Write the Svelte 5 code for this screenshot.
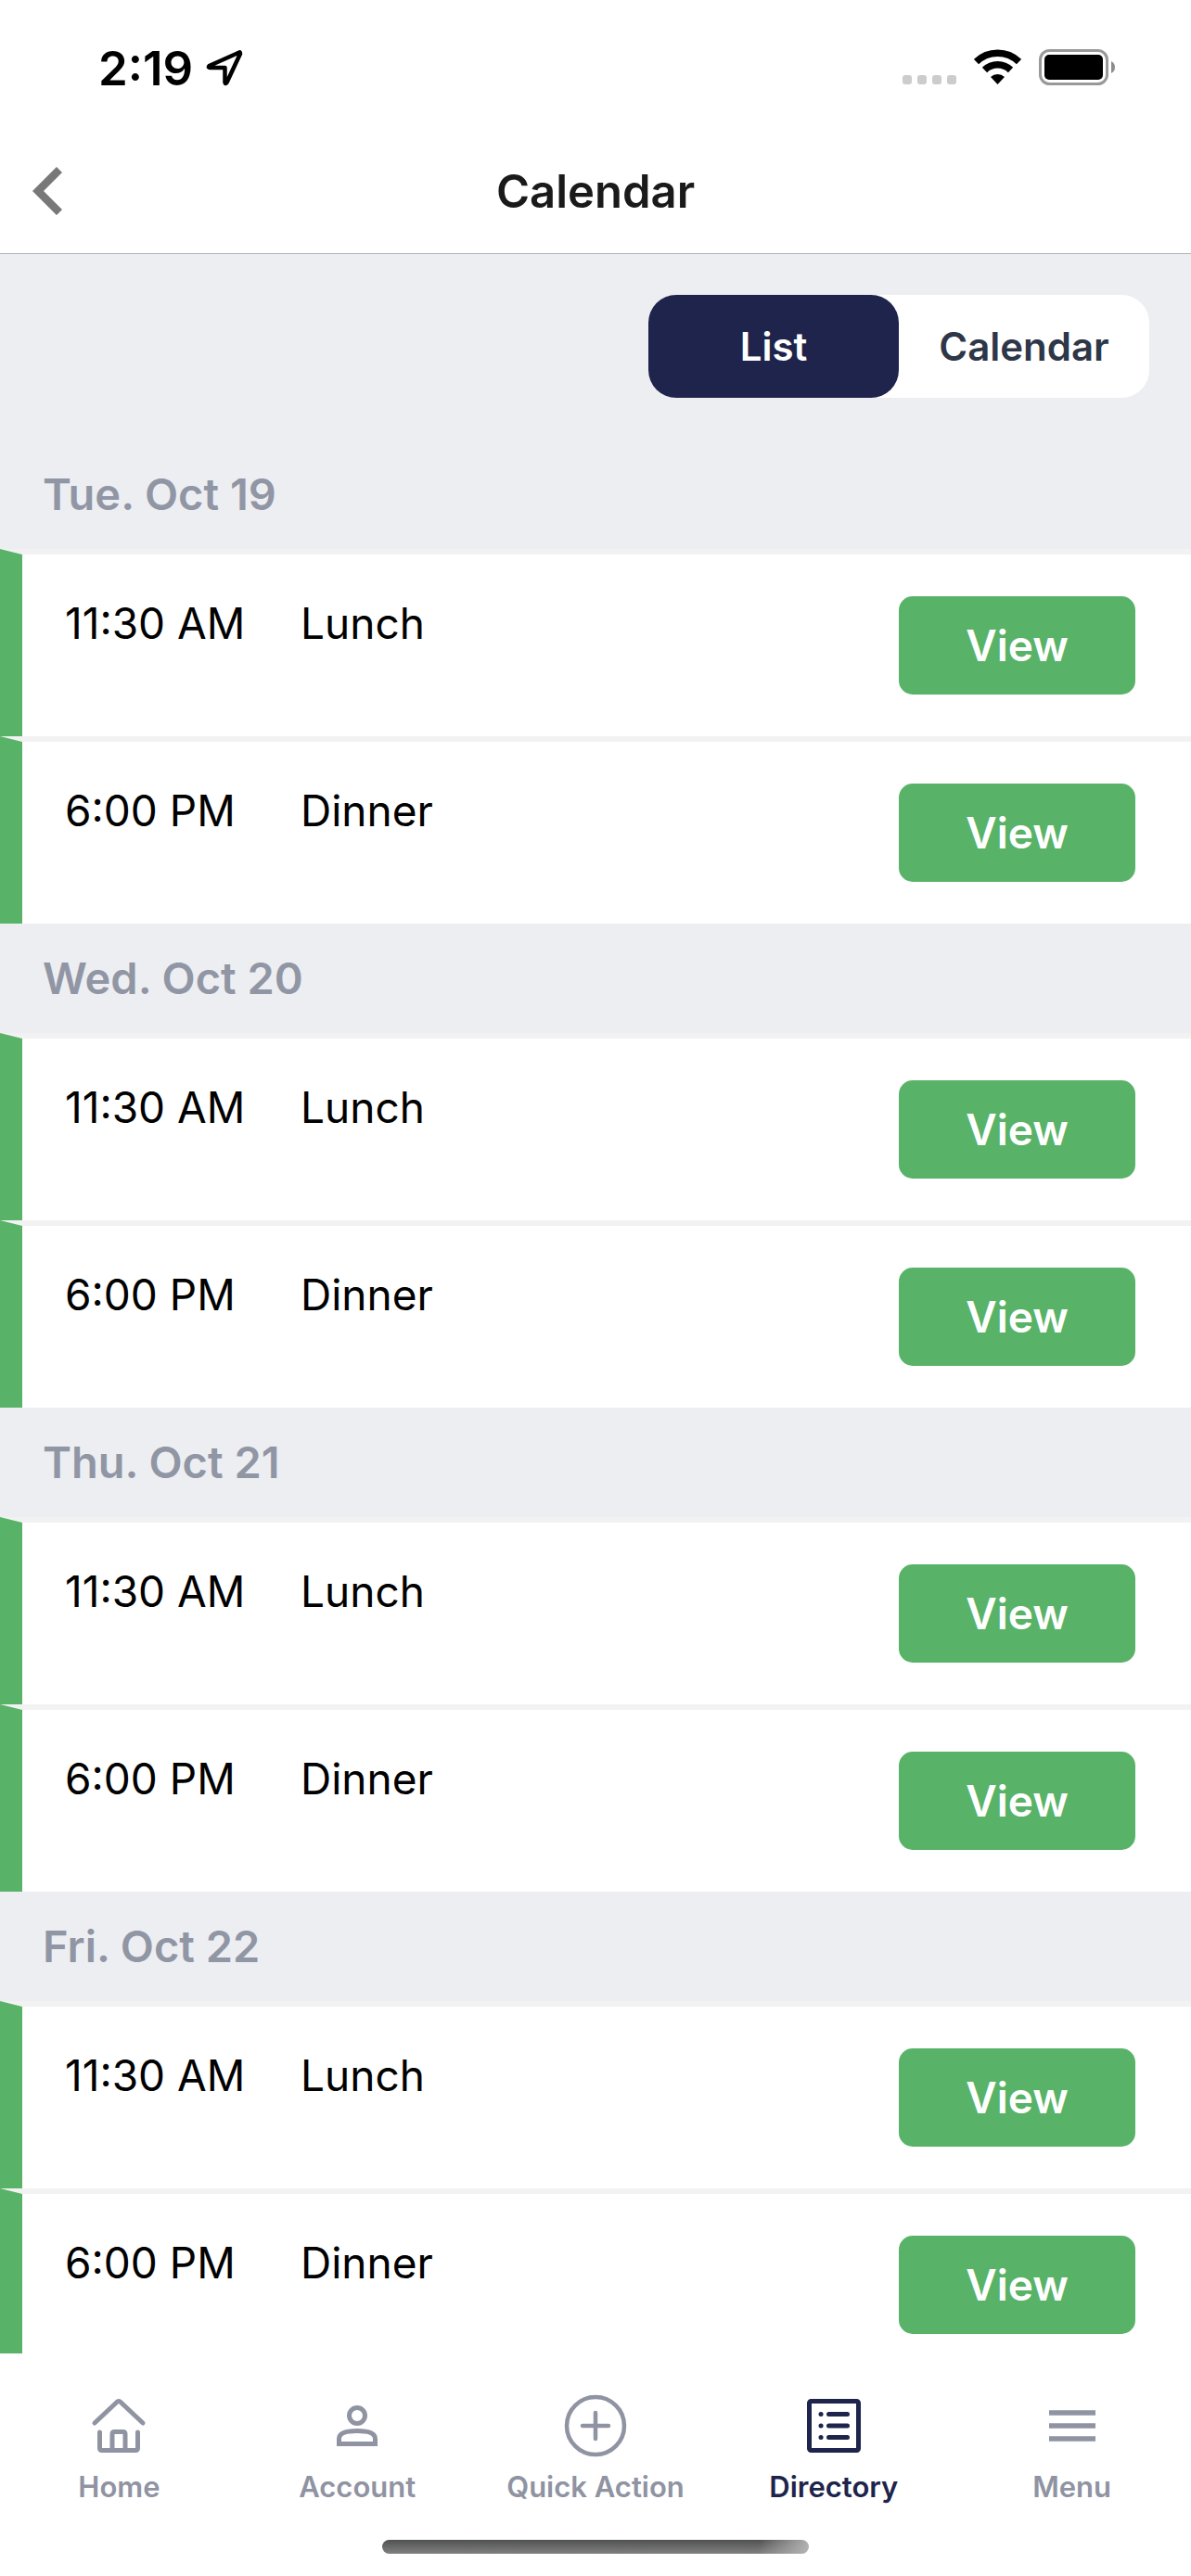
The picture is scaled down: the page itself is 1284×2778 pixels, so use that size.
<script>
  const days = ['Tue. Oct 19', 'Wed. Oct 20', 'Thu. Oct 21', 'Fri. Oct 22'];

  const meals = [
    { time: '11:30 AM', name: 'Lunch' },
    { time: '6:00 PM', name: 'Dinner' }
  ];

  const tabs = [
    { id: 'home', label: 'Home' },
    { id: 'account', label: 'Account' },
    { id: 'quick', label: 'Quick Action' },
    { id: 'directory', label: 'Directory' },
    { id: 'menu', label: 'Menu' }
  ];

  let view = $state('List');
  let activeTab = $state('directory');
</script>

<div class="screen">
  <div class="status-bar">
    <div class="clock">
      <span>2:19</span>
      <svg width="42" height="42" viewBox="0 0 42 42" aria-hidden="true">
        <path d="M36 4.500 L3.500 19 Q2 21 4.500 21 H20.500 V37 Q21 39 22.500 37 L37 6 Q37 4 36 4.500 Z" fill="none" stroke="#000" stroke-width="4.500" stroke-linejoin="round" />
      </svg>
    </div>
    <div class="signals">
      <svg width="58" height="40" viewBox="0 0 58 40" fill="#ccc" aria-hidden="true">
        <rect x="0" y="28" width="10" height="10" rx="3" />
        <rect x="16" y="28" width="10" height="10" rx="3" />
        <rect x="32" y="28" width="10" height="10" rx="3" />
        <rect x="48" y="28" width="10" height="10" rx="3" />
      </svg>
      <svg width="51" height="40" viewBox="0 0 51 40" aria-hidden="true">
        <path d="M2.500 13.500 A33 33 0 0 1 48.500 13.500" fill="none" stroke="#000" stroke-width="7.500" />
        <path d="M11.500 22.500 A20 20 0 0 1 39.500 22.500" fill="none" stroke="#000" stroke-width="7.500" />
        <path d="M25.500 38 L18 30 A11 11 0 0 1 33 30 Z" />
      </svg>
      <svg width="83" height="40" viewBox="0 0 83 40" aria-hidden="true">
        <rect x="1.500" y="1.500" width="72" height="36" rx="10" fill="none" stroke="#999" stroke-width="3" />
        <rect x="6" y="6" width="63" height="27" rx="5" />
        <path d="M78 13 Q82 15 82 19.500 Q82 24 78 26 Z" fill="#8c8c8c" />
      </svg>
    </div>
  </div>

  <header>
    <button class="back" aria-label="Back">
      <svg width="32" height="52" viewBox="0 0 32 52" aria-hidden="true">
        <path d="M29 3 L6 26 L29 49" fill="none" stroke="#787878" stroke-width="8.500" />
      </svg>
    </button>
    <h1>Calendar</h1>
  </header>

  <main>
    <div class="toolbar">
      <div class="segment">
        {#each ['List', 'Calendar'] as option}
          <button class:selected={view === option} aria-pressed={view === option} onclick={() => (view = option)}>{option}</button>
        {/each}
      </div>
    </div>

    {#each days as day}
      <section>
        <h2>{day}</h2>
        <ul>
          {#each meals as meal}
            <li>
              <span class="time">{meal.time}</span>
              <span class="name">{meal.name}</span>
              <button class="view">View</button>
            </li>
          {/each}
        </ul>
      </section>
    {/each}
  </main>

  <footer>
    <nav>
      {#each tabs as tab}
        <button class:active={activeTab === tab.id} onclick={() => (activeTab = tab.id)}>
          <svg width="68" height="68" viewBox="0 0 68 68" fill="none" stroke="currentColor" stroke-width="5" stroke-linecap="round" stroke-linejoin="round" aria-hidden="true">
            {#if tab.id === 'home'}
              <path d="M8 31 L32.500 8 Q34 7 35.500 8 L60 31" />
              <path d="M13.500 41 V58 Q13.500 60.500 16 60.500 H52 Q54.500 60.500 54.500 58 V41" />
              <path d="M27 60 V43 Q27 40.500 29.500 40.500 H38.500 Q41 40.500 41 43 V60" />
            {:else if tab.id === 'account'}
              <circle cx="34" cy="23" r="8.500" />
              <path d="M14.500 53.500 V48 C14.500 41.500 24 39.500 34 39.500 C44 39.500 53.500 41.500 53.500 48 V53.500 Z" stroke-linejoin="miter" />
            {:else if tab.id === 'quick'}
              <circle cx="34" cy="34" r="31" stroke-width="4.500" />
              <path d="M34 20 V48 M20 34 H48" stroke-width="4.500" />
            {:else if tab.id === 'directory'}
              <rect x="7.500" y="7.500" width="53" height="53" rx="2" />
              <path d="M28.500 21.500 H48.500 M28.500 34 H48.500 M28.500 46.500 H48.500" />
              <path d="M20 21.500 h.1 M20 34 h.1 M20 46.500 h.1" />
            {:else}
              <path d="M9 20 H59 M9 34 H59 M9 48 H59" stroke-width="5.500" stroke-linecap="butt" />
            {/if}
          </svg>
          <span>{tab.label}</span>
        </button>
      {/each}
    </nav>
    <div class="home-indicator"></div>
  </footer>
</div>

<style>
  :global(body) {
    background: #fff;
  }

  .screen {
    display: flex;
    flex-direction: column;
    height: 100vh;
    overflow: hidden;
    font-family: Inter, 'Liberation Sans', sans-serif;
    color: #000;
  }

  button {
    border: 0;
    padding: 0;
    background: none;
    font: inherit;
    color: inherit;
    cursor: pointer;
  }

  svg {
    display: block;
    flex: none;
  }

  .status-bar {
    display: flex;
    justify-content: space-between;
    align-items: center;
    height: 146px;
    padding: 0 81px 0 106px;
  }

  .clock {
    display: flex;
    align-items: center;
    gap: 14px;
    font-size: 51px;
    font-weight: 600;
  }

  .signals {
    display: flex;
    gap: 19px;
  }

  header {
    display: grid;
    grid-template-columns: 102px 1fr 102px;
    align-items: center;
    height: 120px;
    padding-bottom: 7px;
    border-bottom: 1px solid #afb3b8;
  }

  .back {
    justify-self: center;
  }

  h1 {
    margin: 0;
    text-align: center;
    font-size: 49px;
    font-weight: 600;
    color: #1a1a1a;
  }

  main {
    flex: 1;
    min-height: 0;
    overflow: hidden;
    background: #edeef2;
  }

  .toolbar {
    display: flex;
    justify-content: flex-end;
    padding: 44px 45px 45px;
  }

  .segment {
    display: flex;
    border-radius: 30px;
    background: #fff;
  }

  .segment button {
    width: 270px;
    height: 111px;
    border-radius: 30px;
    font-size: 42px;
    font-weight: 600;
    color: #2e3748;
  }

  .segment .selected {
    background: #1e244b;
    color: #fff;
  }

  h2 {
    margin: 0;
    padding: 0 46px;
    line-height: 118px;
    font-size: 47px;
    font-weight: 600;
    color: #9196a5;
  }

  ul {
    margin: 0;
    padding: 0;
    list-style: none;
  }

  /* the unequal top and left borders meet in the slanted corner of each row */
  li {
    display: flex;
    align-items: flex-start;
    height: 106px;
    padding: 45px 60px 45px 46px;
    border-top: 6px solid #f2f2f2;
    border-left: 24px solid #58b368;
    background: #fff;
    font-size: 46px;
    line-height: 58px;
  }

  .time {
    width: 254px;
  }

  .name {
    flex: 1;
  }

  .view {
    width: 255px;
    height: 106px;
    border-radius: 15px;
    background: #58b368;
    font-weight: 600;
    color: #fff;
  }

  footer {
    display: flex;
    flex-direction: column;
    align-items: center;
    background: #fff;
  }

  nav {
    display: grid;
    grid-template-columns: repeat(5, 1fr);
    width: 100%;
    padding-top: 44px;
  }

  nav button {
    display: flex;
    flex-direction: column;
    align-items: center;
    gap: 12px;
    height: 157px;
    font-size: 31px;
    font-weight: 600;
    line-height: 40px;
    white-space: nowrap;
    color: #9093a2;
  }

  nav .active {
    color: #1e244b;
  }

  .home-indicator {
    width: 460px;
    height: 15px;
    margin-bottom: 24px;
    border-radius: 8px;
    background: linear-gradient(100deg, transparent 88%, #b4b4b4 100%), linear-gradient(#505251, #808080);
  }
</style>
